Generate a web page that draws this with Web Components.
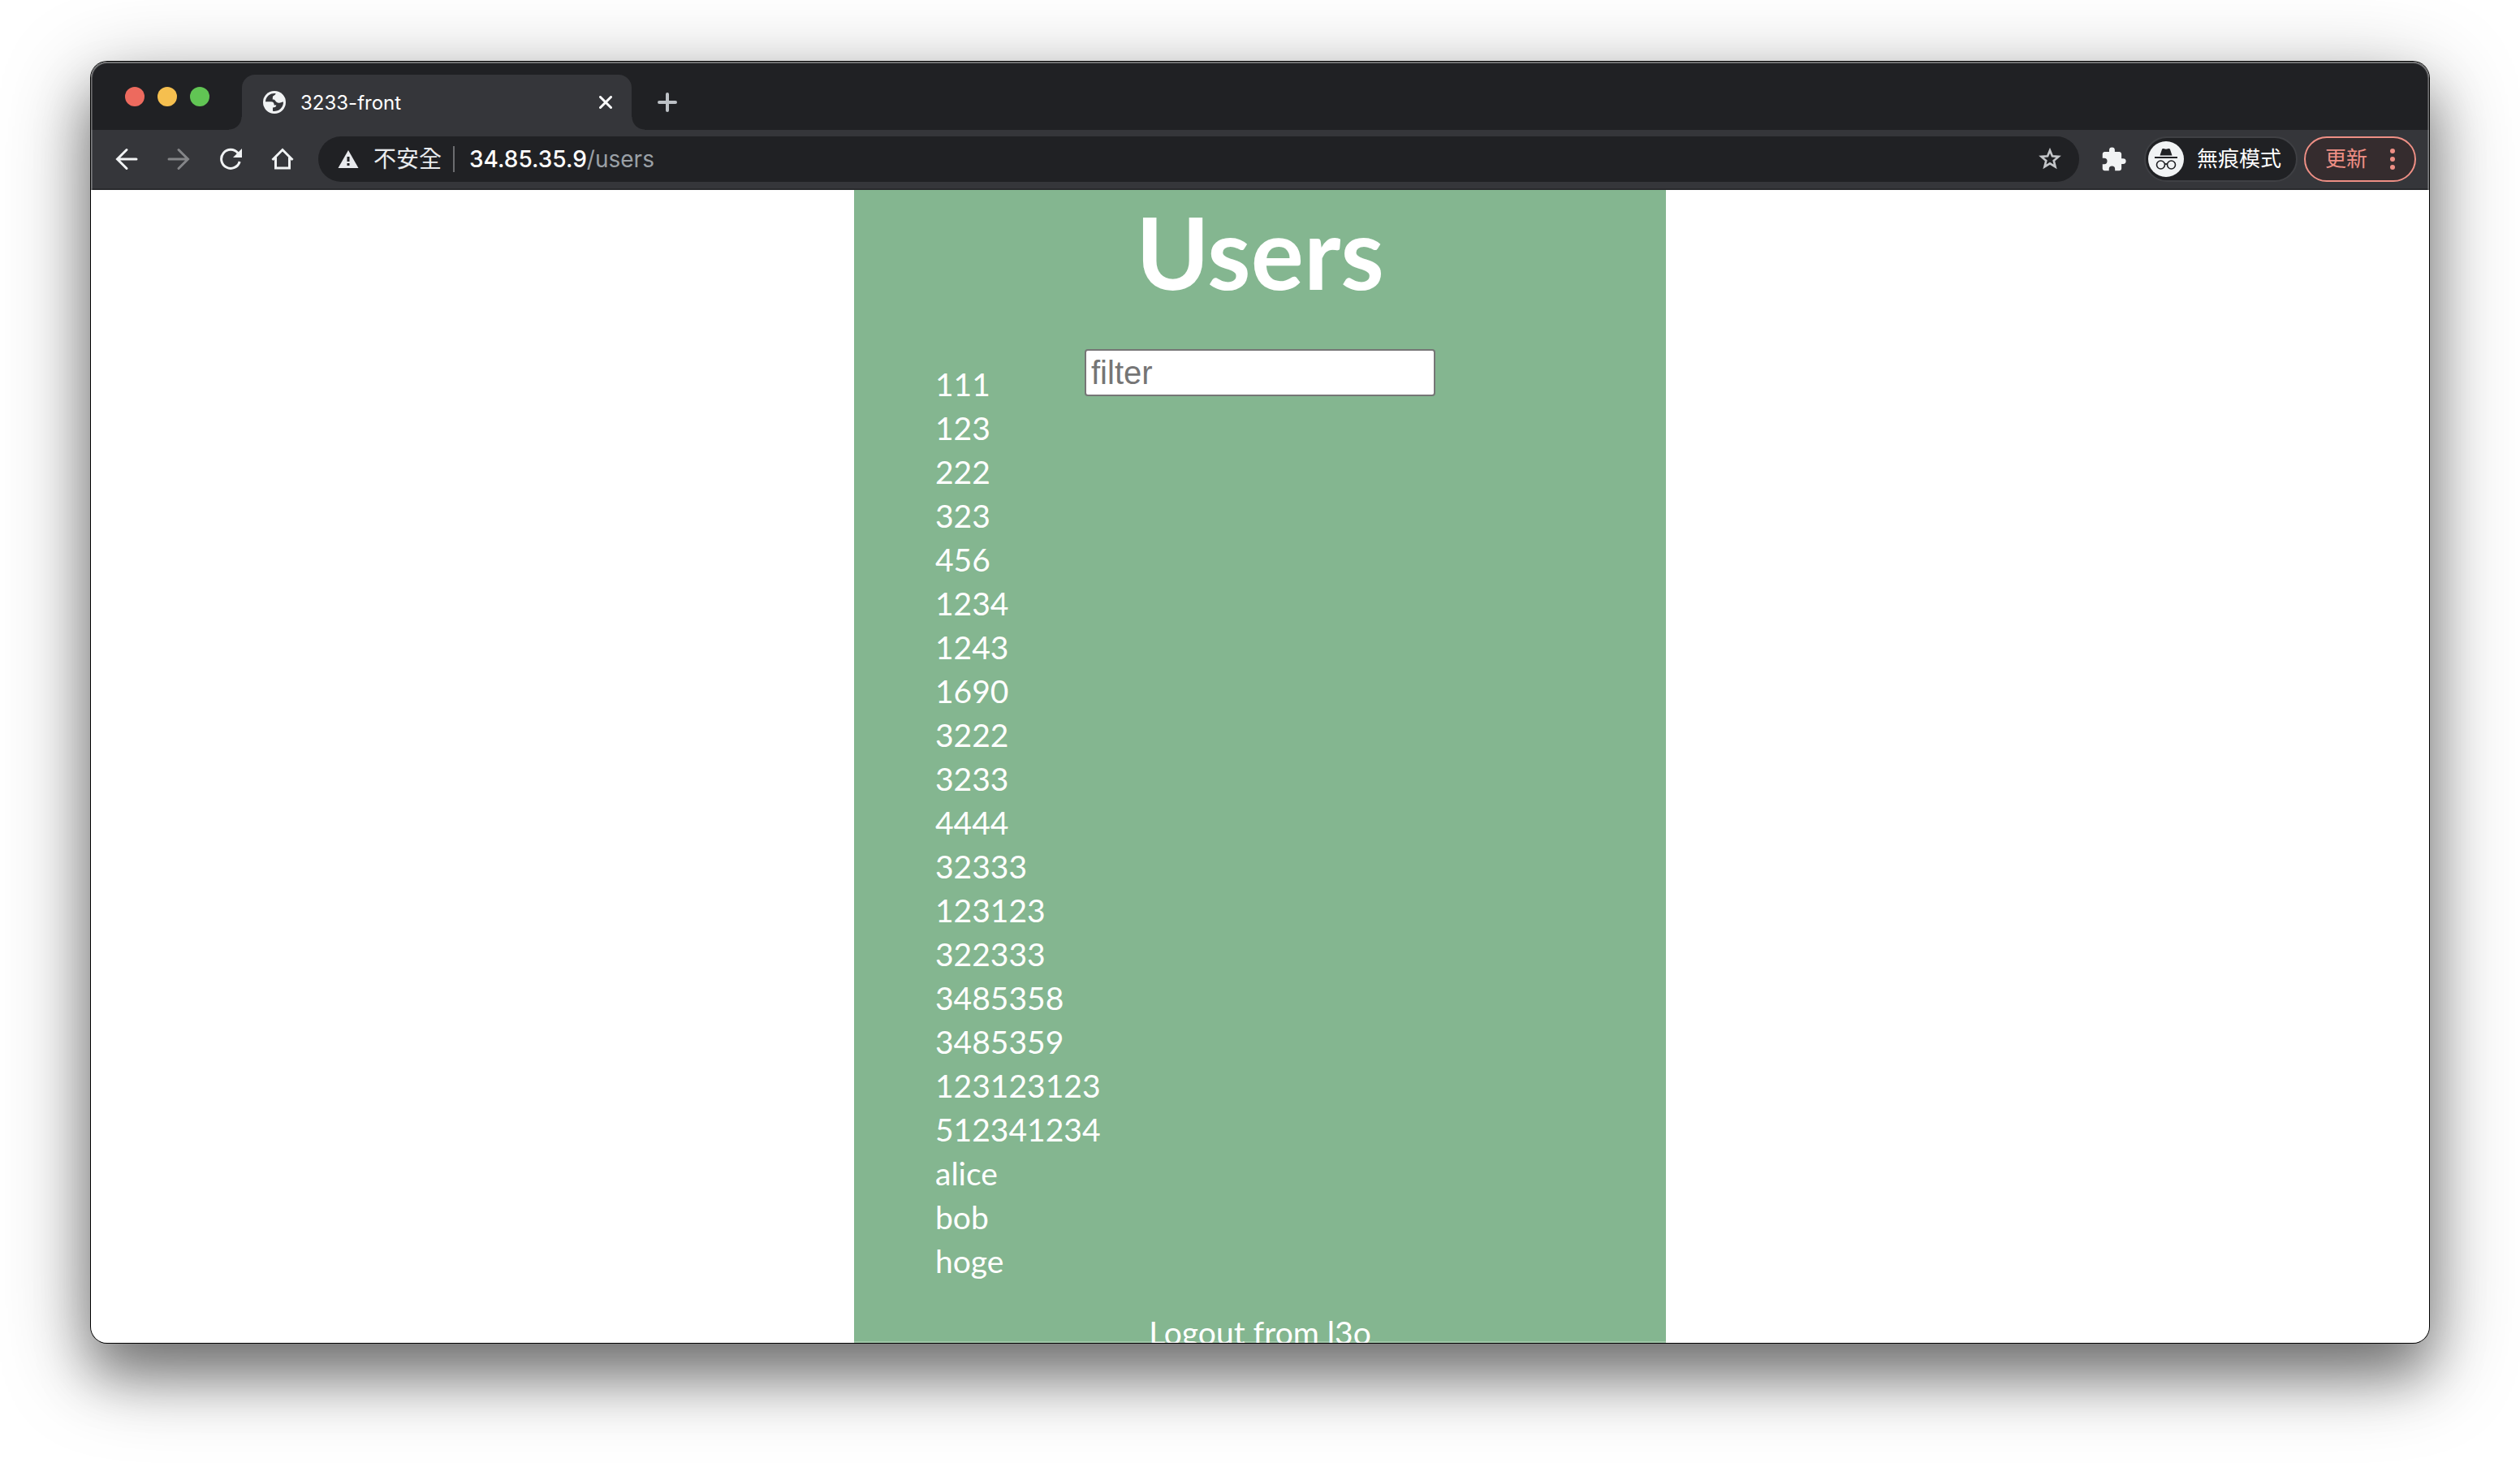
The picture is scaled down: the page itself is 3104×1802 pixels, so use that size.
<!DOCTYPE html>
<html lang="zh-Hant">
<head>
<meta charset="utf-8">
<title>3233-front</title>
<style>
html,body{margin:0;background:#fff;height:100%;overflow:hidden}
body{font-family:Inter,"Noto Sans CJK TC",sans-serif;display:flex;box-sizing:border-box;padding:76px 112px 148px}
browser-window{flex:1;min-width:0}
</style>
</head>
<body>
<browser-window>
  <tab-strip slot="tabs"><browser-tab>3233-front</browser-tab></tab-strip>
  <tool-bar slot="toolbar"></tool-bar>
  <users-page>
    <user-list names="111,123,222,323,456,1234,1243,1690,3222,3233,4444,32333,123123,322333,3485358,3485359,123123123,512341234,alice,bob,hoge"></user-list>
  </users-page>
</browser-window>
<script>
const define = (name, html) => customElements.define(name, class extends HTMLElement {
  constructor() {
    super();
    this.attachShadow({mode: 'open'}).innerHTML = html;
  }
});
const base = `:host,*{box-sizing:border-box}button{font:inherit;color:inherit;background:none;border:0;padding:0;margin:0;display:flex;align-items:center;justify-content:center}svg{display:block}a{color:inherit;text-decoration:none}`;

define('browser-window', `<style>${base}
:host{display:flex;flex-direction:column;position:relative;border-radius:20px;background:#fff;
box-shadow:0 0 0 1px #000,0 40px 64px rgba(0,0,0,.36),0 28px 110px rgba(0,0,0,.38)}
.clip{flex:1;min-height:0;display:flex;flex-direction:column;border-radius:20px;overflow:hidden}
.view{flex:1;min-height:0;overflow:hidden;display:flex;justify-content:center}
.rim{position:absolute;inset:0;border-radius:20px;pointer-events:none;box-shadow:inset 0 0 0 2px rgba(255,255,255,.22),inset 0 1px 0 1px rgba(255,255,255,.18)}
</style><div class="clip"><slot name="tabs"></slot><slot name="toolbar"></slot><div class="view"><slot></slot></div></div><div class="rim"></div>`);

define('tab-strip', `<style>${base}
:host{display:flex;height:84px;background:#202124;padding:16px 0 0 42px;align-items:stretch}
.lights{display:flex;gap:16px;padding-top:15px;width:144px}
.lights button{width:24px;height:24px;border-radius:50%}
.r{background:#ed6a5e}.y{background:#f5bf4f}.g{background:#61c554}
.new{width:56px;margin-left:16px}
</style>
<div class="lights"><button class="r" aria-label="close"></button><button class="y" aria-label="minimise"></button><button class="g" aria-label="zoom"></button></div>
<slot></slot>
<button class="new" aria-label="new tab"><svg width="24" height="24" viewBox="0 0 24 24" stroke="#bdc1c6" stroke-width="4" stroke-linecap="round"><path d="M12 2v20M2 12h20"/></svg></button>`);

define('browser-tab', `<style>${base}
:host{display:flex;width:480px;background:#35363a;border-radius:16px 16px 0 0;align-items:center;padding:0 24px 0 26px;position:relative;color:#fff;font-size:24px}
:host::before,:host::after{content:"";position:absolute;bottom:0;width:16px;height:16px}
:host::before{right:100%;background:radial-gradient(circle at 0 0,transparent 15px,#35363a 16px)}
:host::after{left:100%;background:radial-gradient(circle at 100% 0,transparent 15px,#35363a 16px)}
.t{flex:1;margin-left:18px;white-space:nowrap}
</style>
<svg width="28" height="28" viewBox="0 0 28 28"><circle cx="14" cy="14" r="14" fill="#f1f3f4"/><path fill="#35363a" d="M3 13.200A11 11 0 0 1 15.500 3c.3 2-3 2.500-3.500 4.200-.3 1.300 0 2.300-.3 3.300 1.800 0 2.500.2 3.500 1.700 1.300 2 3 2.600 5 2.600 1.500 0 2.200-1.300 4.800-1.300A11 11 0 0 1 12 24.800v-4.300c2.500 0 4.300-.8 4.300-3h-2.500c-.2-2.800-1.300-4.300-4-4.300z"/></svg>
<span class="t"><slot></slot></span>
<button aria-label="close tab"><svg width="16" height="16" viewBox="0 0 16 16" stroke="#fff" stroke-width="3" stroke-linecap="round"><path d="M1.500 1.500l13 13M14.500 1.500l-13 13"/></svg></button>`);

define('omni-box', `<style>${base}
:host{display:flex;height:56px;border-radius:28px;background:#202124;align-items:center;padding:0 22px 0 24px;font-size:28px;line-height:40px;color:#fff}
.warn{gap:18px;color:#e8eaed;padding-right:14px;border-right:2px solid #6b6c6f;height:32px;line-height:32px}
.url{flex:1;margin-left:18px;white-space:nowrap;outline:0}.host{font-weight:500}.path{color:#9aa0a6}
</style>
<button class="warn"><svg width="26" height="22" viewBox="0 0 26 22"><path fill="#e8eaed" d="M13 0L25.500 22H.5z"/><path fill="#202124" d="M11.500 8h3v6h-3zM11.500 16h3v3h-3z"/></svg>不安全</button>
<div class="url" role="textbox" aria-label="address" contenteditable="true" spellcheck="false"><span class="host">34.85.35.9</span><span class="path">/users</span></div>
<button aria-label="bookmark"><svg width="28" height="28" viewBox="0 0 28 28" fill="none" stroke="#c4c6c9" stroke-width="2.600"><path d="M14 3.200l2.900 7.100 7.700.6-5.900 5 1.900 7.500-6.600-4.100-6.600 4.100 1.900-7.500-5.900-5 7.700-.6z"/></svg></button>`);

define('tool-bar', `<style>${base}
:host{display:flex;height:74px;background:#35363a;border-bottom:2px solid #292a2d;align-items:center;padding:0 16px 0 12px;color:#f1f3f4}
.nav{display:flex}.nav button{width:64px;height:56px}
.off{opacity:.42}
omni-box{flex:1;margin:0 26px 0 12px}
.who{height:56px;border:2px solid #3f4044;border-radius:28px;background:#202124;display:flex;align-items:center;padding:0 18px 0 3px;font-size:26px;line-height:36px;color:#fff;gap:16px;margin:0 8px 0 21px}
.upd{height:56px;border:2px solid #ee8f85;border-radius:28px;background:#352c2e;color:#ee8f85;font-size:26px;line-height:36px;padding:0 24px;gap:28px}
</style>
<div class="nav">
<button aria-label="back"><svg width="28" height="28" viewBox="0 0 28 28" fill="none" stroke="#f1f3f4" stroke-width="3" stroke-linecap="round"><path d="M26 14H3M14 2.500L2.500 14 14 25.500"/></svg></button>
<button class="off" aria-label="forward"><svg width="28" height="28" viewBox="0 0 28 28" fill="none" stroke="#f1f3f4" stroke-width="3" stroke-linecap="round"><path d="M2 14h23M14 2.500L25.500 14 14 25.500"/></svg></button>
<button aria-label="reload"><svg width="28" height="28" viewBox="0 0 28 28"><path fill="none" stroke="#f1f3f4" stroke-width="3" d="M23 6.500A11.500 11.500 0 1 0 25.200 17"/><path fill="#f1f3f4" d="M28 1v11H17z"/></svg></button>
<button aria-label="home"><svg width="28" height="28" viewBox="0 0 28 28" fill="none" stroke="#f1f3f4" stroke-width="3"><path d="M1.500 15L14 2.500 26.500 15M5.500 12v13h17V12"/></svg></button>
</div>
<omni-box></omni-box>
<button aria-label="extensions"><svg width="33" height="33" viewBox="0 0 24 24"><path fill="#f1f3f4" d="M20.500 11H19V7c0-1.100-.9-2-2-2h-4V3.500a2.500 2.500 0 0 0-5 0V5H4c-1.100 0-2 .9-2 2v3.800h1.500a2.700 2.700 0 0 1 0 5.400H2V20c0 1.100.9 2 2 2h3.800v-1.500a2.700 2.700 0 0 1 5.400 0V22H17c1.100 0 2-.9 2-2v-4h1.500a2.500 2.500 0 0 0 0-5z"/></svg></button>
<button class="who"><svg width="44" height="44" viewBox="0 0 44 44"><circle cx="22" cy="22" r="22" fill="#f1f3f4"/><path fill="#202124" d="M14.500 17.500l2.600-7.700c.3-.8 1-1 1.800-.8l3.100.8 3.100-.8c.8-.2 1.500 0 1.800.8l2.600 7.700zM8 19h28v2H8z"/><g fill="none" stroke="#202124" stroke-width="1.600"><circle cx="15.500" cy="29" r="5"/><circle cx="28.500" cy="29" r="5"/><path d="M20.300 28.500q1.700-1.200 3.400 0"/></g></svg>無痕模式</button>
<button class="upd">更新<svg width="6" height="26" viewBox="0 0 6 26" fill="#ee8f85"><circle cx="3" cy="3" r="3"/><circle cx="3" cy="13" r="3"/><circle cx="3" cy="23" r="3"/></svg></button>`);

define('users-page', `<style>${base}
:host{display:block;width:1000px;background:#84b690;color:#fff;font:400 39px/54px Lato,sans-serif}
h1{margin:0;font-size:122px;line-height:152px;font-weight:700;text-align:center;padding-bottom:44px}
.body{display:grid;grid-template-columns:1fr 432px 1fr;align-items:start}
input{grid-area:1/2;height:58px;width:100%;margin:0;border:2px solid #767676;border-radius:4px;background:#fff;font:40px "Liberation Sans",Arial,sans-serif;padding:0 6px;outline:0;z-index:1}
input::placeholder{color:#757575;opacity:1}
slot{display:block;grid-area:1/1/2/-1;padding:16px 100px 34px}
.out{display:block;text-align:center}
</style>
<h1>Users</h1>
<div class="body"><input type="text" placeholder="filter" aria-label="filter"><slot></slot></div>
<a class="out" href="#logout">Logout from l3o</a>`);

customElements.define('user-list', class extends HTMLElement {
  connectedCallback() {
    const root = this.attachShadow({mode: 'open'});
    root.innerHTML = `<style>${base}:host{display:block}ul{list-style:none;margin:0;padding:0}</style><ul></ul>`;
    const ul = root.querySelector('ul');
    for (const name of this.getAttribute('names').split(',')) {
      const li = document.createElement('li');
      const a = document.createElement('a');
      a.href = '#' + name;
      a.textContent = name;
      li.append(a);
      ul.append(li);
    }
  }
});
</script>
</body>
</html>
